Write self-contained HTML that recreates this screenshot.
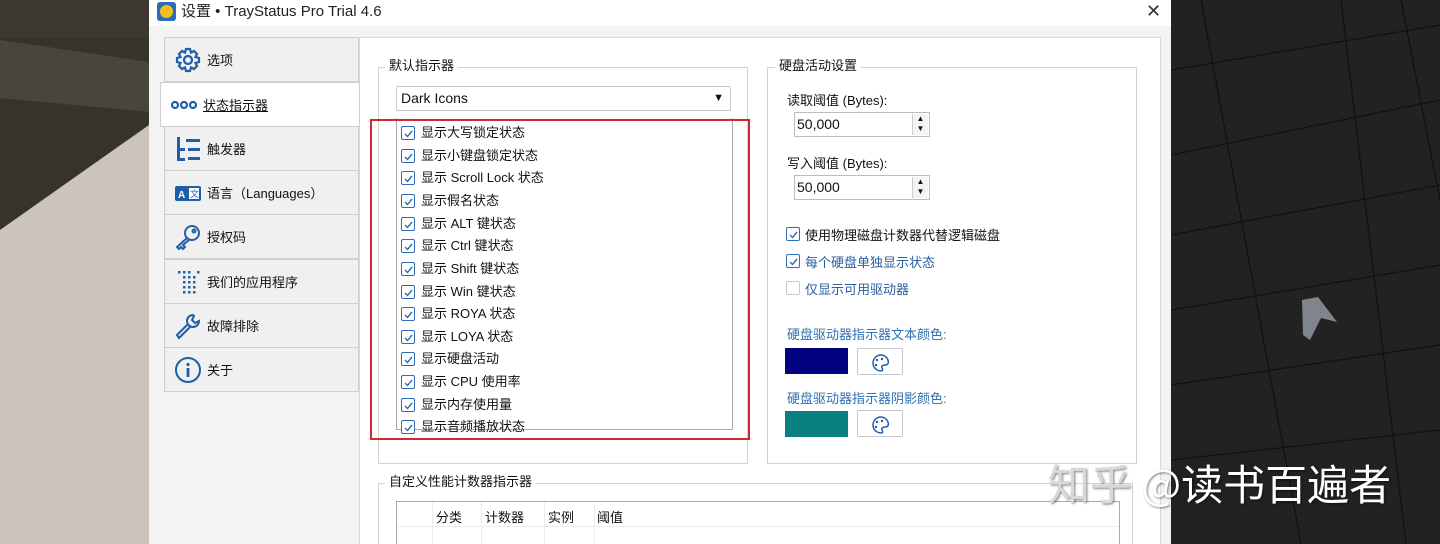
<!DOCTYPE html>
<html><head><meta charset="utf-8"><style>
*{margin:0;padding:0;box-sizing:border-box}
html{width:1440px;height:544px;overflow:hidden}
body{width:1440px;height:544px;overflow:hidden;position:relative;font-family:"Liberation Sans","Noto Sans CJK SC",sans-serif;font-size:13px;color:#111;background:#1c1c1c}
.abs{position:absolute;white-space:nowrap}
.win{left:149px;top:0;width:1022px;height:544px;background:#f3f3f3}
.title{left:149px;top:0;width:1022px;height:26px;background:#fff}
.tab{position:absolute;left:164px;width:195px;height:45px;background:#f0f0f0;border:1px solid #cfcfcf;display:flex;align-items:center;padding-left:9px}
.tab svg{width:28px;height:28px;margin-right:5px;flex:none}
.tab span{font-size:13px;white-space:nowrap}
.panel{left:359px;top:37px;width:802px;height:507px;background:#fff;border:1px solid #dadada;border-bottom:none}
.grp{position:absolute;border:1px solid #d4d4d4}
.gt{position:absolute;background:#fff;padding:0 4px;font-size:13px;line-height:16px;white-space:nowrap}
.cb{position:absolute;width:14px;height:14px;border:1px solid #2e6cb5;border-radius:2px;background:#fff}
.cb svg{position:absolute;left:1px;top:1px}
.row{position:absolute;left:421px;font-size:13px;line-height:16px;white-space:nowrap}
.spin{position:absolute;width:136px;height:25px;border:1px solid #bcbcbc;background:#fff;font-size:14px;line-height:23px;padding-left:2px}
.spin .b{position:absolute;right:1px;top:1px;width:16px;height:21px;border-left:1px solid #ccc;background:#f4f4f4}
.btn{position:absolute;width:46px;height:27px;border:1px solid #c8c8c8;background:#fff;border-radius:2px}
#list{position:absolute;left:0;top:0;width:1440px;height:544px}
</style></head><body>
<svg class="abs" style="left:0;top:0" width="149" height="544">
<rect width="149" height="544" fill="#cbc4bb"/>
<polygon points="0,0 149,0 149,125 0,230" fill="#38322c"/>
<polygon points="0,40 149,62 149,112 0,98" fill="#4a443e"/>
<rect x="0" y="0" width="149" height="38" fill="#3d3732"/>
</svg>
<svg class="abs" style="left:1171px;top:0" width="269" height="544">
<rect width="269" height="544" fill="#222"/>
<g stroke="#111" stroke-width="1.2" fill="none">
<path d="M0,70 L269,25 M0,155 L269,100 M0,235 L269,185 M0,310 L269,265 M0,385 L269,345 M0,460 L269,430"/>
<path d="M170,0 L235,544 M30,0 L130,544 M230,0 L269,200"/>
</g>
<polygon points="131,300 147,297 166,322 150,318 139,340 132,335" fill="#80858d"/>
</svg>
<div class="abs win"></div>
<div class="abs title"></div>
<div class="abs" style="left:157px;top:2px;width:19px;height:19px;background:#2a6cb8;border-radius:3px"><div style="margin:3px;width:13px;height:13px;border-radius:50%;background:#f4c020"></div></div>
<div class="abs" style="left:181px;top:2px;font-size:15px;line-height:20px;color:#222">设置 • TrayStatus Pro Trial 4.6</div>
<div class="abs" style="left:1146px;top:1px;font-size:18px;color:#333">✕</div>

<div class="tab" style="top:37px"><svg viewBox="0 0 28 28"><g fill="none" stroke="#1f5fa8" stroke-width="2.2"><circle cx="14" cy="14" r="4"/><path d="M12,3h4l1,3.5 3-1.5 3,3-1.5,3 3.5,1v4l-3.5,1 1.5,3-3,3-3-1.5-1,3.5h-4l-1-3.5-3,1.5-3-3 1.5-3L3,16v-4l3.5-1L5,8l3-3 3,1.5z"/></g></svg><span>选项</span></div>
<div class="tab" style="top:82px;left:160px;width:200px;background:#fff;z-index:2"><svg viewBox="0 0 28 28" style="width:28px"><g fill="none" stroke="#1f5fa8" stroke-width="2.2"><circle cx="5" cy="14" r="3"/><circle cx="14" cy="14" r="3"/><circle cx="23" cy="14" r="3"/></g></svg><span style="text-decoration:underline">状态指示器</span></div>
<div class="tab" style="top:126px"><svg viewBox="0 0 28 28"><g fill="#1f5fa8"><rect x="3" y="2" width="3" height="24"/><rect x="3" y="23" width="8" height="3"/><rect x="3" y="13" width="8" height="3"/><rect x="12" y="4" width="14" height="3"/><rect x="14" y="13" width="12" height="3"/><rect x="14" y="22" width="12" height="3"/></g></svg><span>触发器</span></div>
<div class="tab" style="top:170px"><svg viewBox="0 0 28 28"><rect x="1" y="7" width="26" height="15" rx="2" fill="#1f5fa8"/><rect x="15" y="9" width="10" height="11" fill="#fff"/><text x="4" y="19" font-size="10" font-weight="bold" fill="#fff" font-family="Liberation Sans">A</text><text x="16" y="18" font-size="9" fill="#1f5fa8">文</text></svg><span>语言（Languages）</span></div>
<div class="tab" style="top:214px"><svg viewBox="0 0 28 28"><g fill="none" stroke="#1f5fa8" stroke-width="2"><circle cx="18" cy="10" r="7"/><circle cx="20" cy="8" r="1.5"/><path d="M13,15 L3,24 L5,26 L7,24 L9,26 L11,24 L9,22 L15,17"/></g></svg><span>授权码</span></div>
<div class="tab" style="top:259px"><svg viewBox="0 0 28 28"><g fill="#1f5fa8"><rect x="4" y="3" width="2.5" height="2.5"/><rect x="9" y="3" width="2.5" height="2.5"/><rect x="14" y="3" width="2.5" height="2.5"/><rect x="23" y="3" width="2.5" height="2.5"/><rect x="9" y="8" width="2.5" height="2.5"/><rect x="14" y="8" width="2.5" height="2.5"/><rect x="19" y="8" width="2.5" height="2.5"/><rect x="9" y="13" width="2.5" height="2.5"/><rect x="14" y="13" width="2.5" height="2.5"/><rect x="19" y="13" width="2.5" height="2.5"/><rect x="9" y="18" width="2.5" height="2.5"/><rect x="14" y="18" width="2.5" height="2.5"/><rect x="19" y="18" width="2.5" height="2.5"/><rect x="9" y="23" width="2.5" height="2.5"/><rect x="14" y="23" width="2.5" height="2.5"/><rect x="19" y="23" width="2.5" height="2.5"/></g></svg><span>我们的应用程序</span></div>
<div class="tab" style="top:303px"><svg viewBox="0 0 28 28"><path d="M19,3 a6,6 0 1 0 6,6 l-4,2 -3,-3 2,-4z M14,12 L3,23 L5,26 L16,15" fill="none" stroke="#1f5fa8" stroke-width="2"/></svg><span>故障排除</span></div>
<div class="tab" style="top:347px"><svg viewBox="0 0 28 28"><circle cx="14" cy="14" r="12" fill="none" stroke="#1f5fa8" stroke-width="2"/><circle cx="14" cy="8.5" r="1.6" fill="#1f5fa8"/><rect x="12.6" y="12" width="2.8" height="9" fill="#1f5fa8"/></svg><span>关于</span></div>

<div class="abs panel"></div>
<div class="grp" style="left:378px;top:67px;width:370px;height:397px"></div>
<div class="gt" style="left:385px;top:58px">默认指示器</div>
<div class="abs" style="left:396px;top:86px;width:335px;height:25px;border:1px solid #c9c9c9;border-radius:2px;font-size:14px;line-height:23px;padding-left:4px">Dark Icons<span style="position:absolute;right:6px;top:0;font-size:11px">▼</span></div>
<div class="abs" style="left:396px;top:118px;width:337px;height:312px;border:1px solid #a9a9a9;border-top:none"></div>
<div class="abs" style="left:370px;top:119px;width:380px;height:321px;border:2px solid #cf2a30"></div>

<div class="grp" style="left:767px;top:67px;width:370px;height:397px"></div>
<div class="gt" style="left:775px;top:58px">硬盘活动设置</div>
<div class="abs" style="left:787px;top:90px">读取阈值 (Bytes):</div>
<div class="spin" style="left:794px;top:112px">50,000<div class="b"><div style="font-size:8px;line-height:10px;text-align:center">▲<br>▼</div></div></div>
<div class="abs" style="left:787px;top:153px">写入阈值 (Bytes):</div>
<div class="spin" style="left:794px;top:175px">50,000<div class="b"><div style="font-size:8px;line-height:10px;text-align:center">▲<br>▼</div></div></div>
<div class="cb" style="left:786px;top:227px"><svg width="11" height="11"><path d="M2,6 L4.5,8.5 L9,3" stroke="#2e6cb5" stroke-width="1.4" fill="none"/></svg></div>
<div class="abs" style="left:805px;top:225px">使用物理磁盘计数器代替逻辑磁盘</div>
<div class="cb" style="left:786px;top:254px"><svg width="11" height="11"><path d="M2,6 L4.5,8.5 L9,3" stroke="#2e6cb5" stroke-width="1.4" fill="none"/></svg></div>
<div class="abs" style="left:805px;top:252px;color:#2a5f9e">每个硬盘单独显示状态</div>
<div class="cb" style="left:786px;top:281px;border-color:#c8c8c8"></div>
<div class="abs" style="left:805px;top:279px;color:#2a5f9e">仅显示可用驱动器</div>
<div class="abs" style="left:787px;top:324px;color:#2f6fb5">硬盘驱动器指示器文本颜色:</div>
<div class="abs" style="left:785px;top:348px;width:63px;height:26px;background:#030382"></div>
<div class="btn" style="left:857px;top:348px"><svg width="46" height="27"><path d="M23,6 a8,8 0 1 0 0,16 c2,0 2,-2 1,-3 c-1,-2 1,-3 3,-3 c3,0 4,-2 3,-5 c-1,-3 -4,-5 -7,-5z" fill="none" stroke="#1f5fa8" stroke-width="1.5"/><circle cx="19" cy="11" r="1.2" fill="#1f5fa8"/><circle cx="24" cy="10" r="1.2" fill="#1f5fa8"/><circle cx="18" cy="16" r="1.2" fill="#1f5fa8"/></svg></div>
<div class="abs" style="left:787px;top:388px;color:#2f6fb5">硬盘驱动器指示器阴影颜色:</div>
<div class="abs" style="left:785px;top:411px;width:63px;height:26px;background:#0b8080"></div>
<div class="btn" style="left:857px;top:410px"><svg width="46" height="27"><path d="M23,6 a8,8 0 1 0 0,16 c2,0 2,-2 1,-3 c-1,-2 1,-3 3,-3 c3,0 4,-2 3,-5 c-1,-3 -4,-5 -7,-5z" fill="none" stroke="#1f5fa8" stroke-width="1.5"/><circle cx="19" cy="11" r="1.2" fill="#1f5fa8"/><circle cx="24" cy="10" r="1.2" fill="#1f5fa8"/><circle cx="18" cy="16" r="1.2" fill="#1f5fa8"/></svg></div>

<div class="grp" style="left:378px;top:483px;width:755px;height:70px"></div>
<div class="gt" style="left:385px;top:474px">自定义性能计数器指示器</div>
<div class="abs" style="left:396px;top:501px;width:724px;height:50px;border:1px solid #a9a9a9;background:#fff"></div>
<div class="abs" style="left:397px;top:526px;width:722px;border-top:1px solid #ececec"></div>
<div class="abs" style="left:432px;top:502px;height:42px;border-left:1px solid #ececec"></div>
<div class="abs" style="left:481px;top:502px;height:42px;border-left:1px solid #ececec"></div>
<div class="abs" style="left:544px;top:502px;height:42px;border-left:1px solid #ececec"></div>
<div class="abs" style="left:594px;top:502px;height:42px;border-left:1px solid #ececec"></div>
<div class="abs" style="left:436px;top:507px">分类</div>
<div class="abs" style="left:485px;top:507px">计数器</div>
<div class="abs" style="left:548px;top:507px">实例</div>
<div class="abs" style="left:597px;top:507px">阈值</div>

<div id="list">
<div class="cb" style="left:401px;top:126px"><svg width="11" height="11"><path d="M2,6 L4.5,8.5 L9,3" stroke="#2e6cb5" stroke-width="1.4" fill="none"/></svg></div><div class="row" style="top:125px">显示大写锁定状态</div>
<div class="cb" style="left:401px;top:149px"><svg width="11" height="11"><path d="M2,6 L4.5,8.5 L9,3" stroke="#2e6cb5" stroke-width="1.4" fill="none"/></svg></div><div class="row" style="top:148px">显示小键盘锁定状态</div>
<div class="cb" style="left:401px;top:171px"><svg width="11" height="11"><path d="M2,6 L4.5,8.5 L9,3" stroke="#2e6cb5" stroke-width="1.4" fill="none"/></svg></div><div class="row" style="top:170px">显示 Scroll Lock 状态</div>
<div class="cb" style="left:401px;top:194px"><svg width="11" height="11"><path d="M2,6 L4.5,8.5 L9,3" stroke="#2e6cb5" stroke-width="1.4" fill="none"/></svg></div><div class="row" style="top:193px">显示假名状态</div>
<div class="cb" style="left:401px;top:217px"><svg width="11" height="11"><path d="M2,6 L4.5,8.5 L9,3" stroke="#2e6cb5" stroke-width="1.4" fill="none"/></svg></div><div class="row" style="top:216px">显示 ALT 键状态</div>
<div class="cb" style="left:401px;top:239px"><svg width="11" height="11"><path d="M2,6 L4.5,8.5 L9,3" stroke="#2e6cb5" stroke-width="1.4" fill="none"/></svg></div><div class="row" style="top:238px">显示 Ctrl 键状态</div>
<div class="cb" style="left:401px;top:262px"><svg width="11" height="11"><path d="M2,6 L4.5,8.5 L9,3" stroke="#2e6cb5" stroke-width="1.4" fill="none"/></svg></div><div class="row" style="top:261px">显示 Shift 键状态</div>
<div class="cb" style="left:401px;top:285px"><svg width="11" height="11"><path d="M2,6 L4.5,8.5 L9,3" stroke="#2e6cb5" stroke-width="1.4" fill="none"/></svg></div><div class="row" style="top:284px">显示 Win 键状态</div>
<div class="cb" style="left:401px;top:307px"><svg width="11" height="11"><path d="M2,6 L4.5,8.5 L9,3" stroke="#2e6cb5" stroke-width="1.4" fill="none"/></svg></div><div class="row" style="top:306px">显示 ROYA 状态</div>
<div class="cb" style="left:401px;top:330px"><svg width="11" height="11"><path d="M2,6 L4.5,8.5 L9,3" stroke="#2e6cb5" stroke-width="1.4" fill="none"/></svg></div><div class="row" style="top:329px">显示 LOYA 状态</div>
<div class="cb" style="left:401px;top:352px"><svg width="11" height="11"><path d="M2,6 L4.5,8.5 L9,3" stroke="#2e6cb5" stroke-width="1.4" fill="none"/></svg></div><div class="row" style="top:351px">显示硬盘活动</div>
<div class="cb" style="left:401px;top:375px"><svg width="11" height="11"><path d="M2,6 L4.5,8.5 L9,3" stroke="#2e6cb5" stroke-width="1.4" fill="none"/></svg></div><div class="row" style="top:374px">显示 CPU 使用率</div>
<div class="cb" style="left:401px;top:398px"><svg width="11" height="11"><path d="M2,6 L4.5,8.5 L9,3" stroke="#2e6cb5" stroke-width="1.4" fill="none"/></svg></div><div class="row" style="top:397px">显示内存使用量</div>
<div class="cb" style="left:401px;top:420px"><svg width="11" height="11"><path d="M2,6 L4.5,8.5 L9,3" stroke="#2e6cb5" stroke-width="1.4" fill="none"/></svg></div><div class="row" style="top:419px">显示音频播放状态</div>
</div>

<div class="abs" style="left:1048px;top:455px;font-family:'Noto Sans CJK SC',sans-serif;font-size:42px;line-height:56px;color:#fff;text-shadow:1px 1px 2px rgba(0,0,0,.5)"><span style="color:#d8d8d8">知乎</span> @读书百遍者</div>
</body></html>
